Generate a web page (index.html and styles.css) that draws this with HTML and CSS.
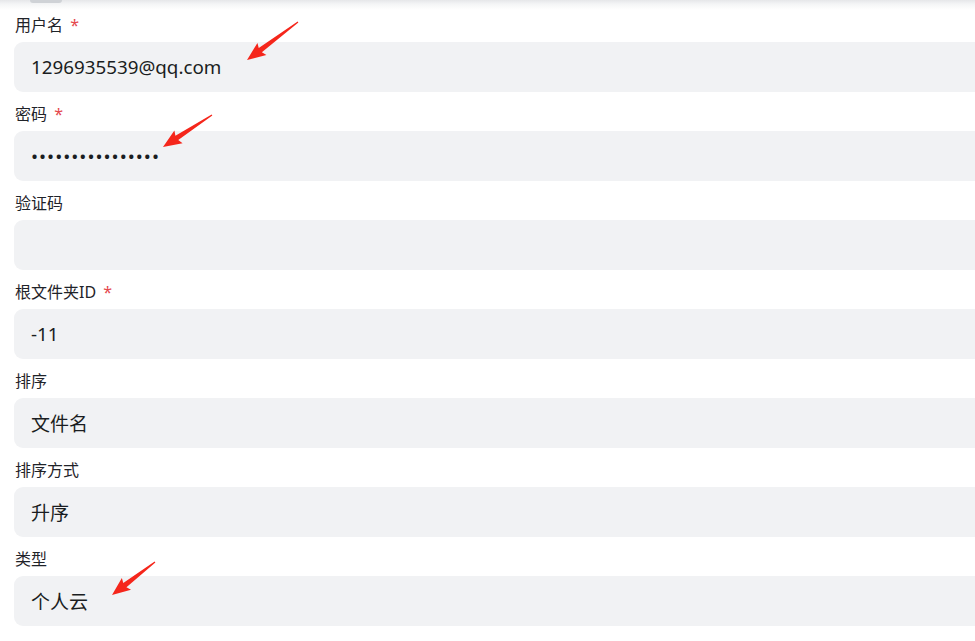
FILE: index.html
```html
<!DOCTYPE html>
<html lang="zh-CN">
<head>
<meta charset="utf-8">
<title>表单</title>
<link rel="stylesheet" href="styles.css">
</head>
<body>
<div class="topbar"><span class="pill"></span></div>
<form class="form">
  <div class="field">
    <label class="label">用户名 <span class="req">*</span></label>
    <input class="input" type="text" value="1296935539@qq.com">
  </div>
  <div class="field">
    <label class="label">密码 <span class="req">*</span></label>
    <input class="input input-pass" type="password" value="abcdefghijklmnop">
  </div>
  <div class="field">
    <label class="label">验证码</label>
    <input class="input" type="text" value="">
  </div>
  <div class="field">
    <label class="label">根文件夹ID <span class="req">*</span></label>
    <input class="input" type="text" value="-11">
  </div>
  <div class="field">
    <label class="label">排序</label>
    <div class="input select">文件名</div>
  </div>
  <div class="field">
    <label class="label">排序方式</label>
    <div class="input select">升序</div>
  </div>
  <div class="field">
    <label class="label">类型</label>
    <div class="input select">个人云</div>
  </div>
</form>
<svg class="arrows" width="975" height="641" viewBox="0 0 975 641" aria-hidden="true">
  <g fill="#f5261b">
    <polygon transform="translate(298 22) rotate(143.3)" points="0,-0.6 47,-2.6 45,-7.5 63.6,0 45,7.5 47,2.6 0,0.6"/>
    <polygon transform="translate(212 115) rotate(146.9)" points="0,-0.6 42,-2.6 40,-7.5 58.5,0 40,7.5 42,2.6 0,0.6"/>
    <polygon transform="translate(155 562) rotate(142.5)" points="0,-0.6 38,-2.6 36,-7.5 54.2,0 36,7.5 38,2.6 0,0.6"/>
  </g>
</svg>
</body>
</html>
```

FILE: styles.css
```css
html, body {
  margin: 0;
  padding: 0;
  overflow: hidden;
  background: #ffffff;
  font-family: "Noto Sans", "Noto Sans CJK SC", sans-serif;
  color: #1f2329;
}

body {
  position: relative;
  width: 975px;
  height: 641px;
}

.topbar {
  height: 13px;
  background: linear-gradient(to bottom, #e6e7e9 0px, #f4f5f6 4px, #ffffff 10px);
  padding-left: 30px;
}

.pill {
  display: block;
  width: 32px;
  height: 3px;
  background: #cfd2d6;
  border-radius: 0 0 8px 8px;
}

.form {
  display: flex;
  flex-direction: column;
  gap: 10px;
  padding-left: 14px;
  margin: 0;
}

.field {
  display: flex;
  flex-direction: column;
  gap: 5px;
}

.label {
  font-size: 16px;
  line-height: 24px;
  height: 24px;
  color: #1f2329;
  padding-left: 1px;
}

.req {
  color: #e5484d;
  margin-left: 3px;
}

.input {
  box-sizing: border-box;
  width: 1000px;
  height: 50px;
  border: 0;
  outline: none;
  border-radius: 9px;
  background: #f1f2f4;
  padding: 0 17px;
  font-family: "Noto Sans", "Noto Sans CJK SC", sans-serif;
  font-size: 18.8px;
  color: #1a1d21;
  margin: 0;
}

.select {
  display: flex;
  align-items: center;
  font-size: 19px;
}

.input-pass {
  letter-spacing: 1px;
}

.arrows {
  position: absolute;
  left: 0;
  top: 0;
  pointer-events: none;
}
```
